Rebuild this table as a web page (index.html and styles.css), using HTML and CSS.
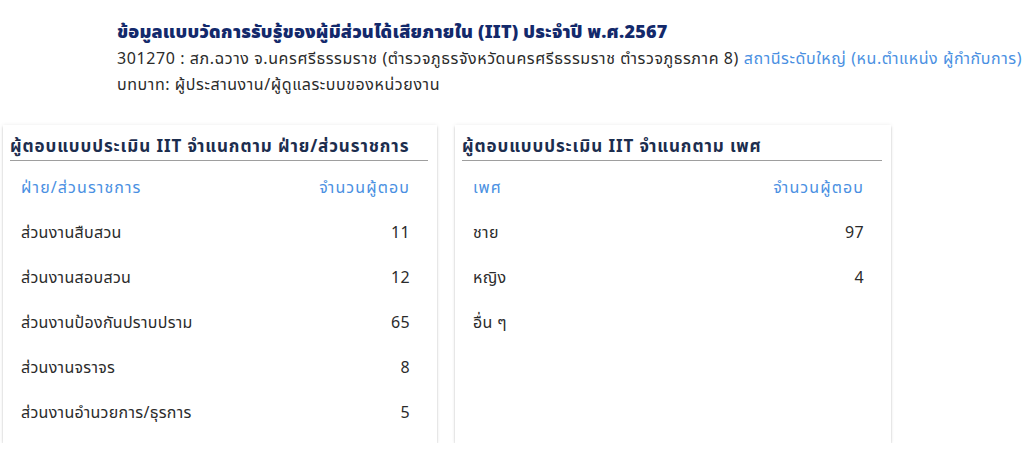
FILE: index.html
```html
<!DOCTYPE html>
<html lang="th">
<head>
<meta charset="utf-8">
<link rel="stylesheet" href="styles.css">
</head>
<body>
<header class="intro">
  <h1 class="intro-title">ข้อมูลแบบวัดการรับรู้ของผู้มีส่วนได้เสียภายใน (IIT) ประจำปี พ.ศ.2567</h1>
  <p class="intro-line">301270 : สภ.ฉวาง จ.นครศรีธรรมราช (ตำรวจภูธรจังหวัดนครศรีธรรมราช ตำรวจภูธรภาค 8) <span class="accent">สถานีระดับใหญ่ (หน.ตำแหน่ง ผู้กำกับการ)</span></p>
  <p class="intro-line">บทบาท: ผู้ประสานงาน/ผู้ดูแลระบบของหน่วยงาน</p>
</header>
<main class="cards">
  <section class="card">
    <h2 class="card-title">ผู้ตอบแบบประเมิน IIT จำแนกตาม ฝ่าย/ส่วนราชการ</h2>
    <table class="tbl">
      <thead><tr><th>ฝ่าย/ส่วนราชการ</th><th class="num">จำนวนผู้ตอบ</th></tr></thead>
      <tbody>
        <tr><td>ส่วนงานสืบสวน</td><td class="num">11</td></tr>
        <tr><td>ส่วนงานสอบสวน</td><td class="num">12</td></tr>
        <tr><td>ส่วนงานป้องกันปราบปราม</td><td class="num">65</td></tr>
        <tr><td>ส่วนงานจราจร</td><td class="num">8</td></tr>
        <tr><td>ส่วนงานอำนวยการ/ธุรการ</td><td class="num">5</td></tr>
      </tbody>
    </table>
  </section>
  <section class="card">
    <h2 class="card-title">ผู้ตอบแบบประเมิน IIT จำแนกตาม เพศ</h2>
    <table class="tbl">
      <thead><tr><th>เพศ</th><th class="num">จำนวนผู้ตอบ</th></tr></thead>
      <tbody>
        <tr><td>ชาย</td><td class="num">97</td></tr>
        <tr><td>หญิง</td><td class="num">4</td></tr>
        <tr><td>อื่น ๆ</td><td class="num"></td></tr>
      </tbody>
    </table>
  </section>
</main>
</body>
</html>
```
FILE: styles.css
```css
* { box-sizing: border-box; }
html, body { margin: 0; padding: 0; background: #fff; }
body {
  font-family: "Noto Sans Thai", "Noto Sans", "DejaVu Sans", sans-serif;
  color: #333;
  overflow-x: hidden;
}
.intro {
  padding: 19px 0 0 117px;
  height: 125px;
}
.intro-title {
  margin: 0;
  font-size: 18px;
  font-weight: 900;
  letter-spacing: 0.2px;
  color: #13296b;
  line-height: 27px;
}
.intro-line {
  margin: 0;
  font-size: 16px;
  letter-spacing: 0.58px;
  line-height: 26px;
  color: #2b2b2b;
  white-space: nowrap;
}
.accent { color: #4a90e2; }
.cards {
  display: flex;
  gap: 18px;
  padding-left: 3px;
  align-items: flex-start;
}
.card {
  flex: none;
  width: 434px;
  height: 318px;
  background: #fff;
  box-shadow: 0 2px 2px rgba(0,0,0,0.2), 0 0 4px rgba(0,0,0,0.08);
  padding: 11px 9px 0 7px;
}
.card + .card { width: 436px; }
.card-title {
  margin: 0;
  font-size: 17px;
  letter-spacing: 0.9px;
  font-weight: 700;
  color: #1c2d4e;
  line-height: 23px;
  padding-bottom: 1px;
  border-bottom: 1px solid #9e9e9e;
}
.tbl {
  width: 100%;
  border-collapse: collapse;
  font-size: 16px;
  margin-top: 4px;
}
.tbl th, .tbl td {
  height: 45px;
  padding: 0 18px 0 11px;
  text-align: left;
  font-weight: 400;
  vertical-align: middle;
}
.tbl th { color: #4a90e2; letter-spacing: 1.1px; }
.tbl td { color: #2b2b2b; letter-spacing: 0.3px; }
.tbl .num { text-align: right; }
```
